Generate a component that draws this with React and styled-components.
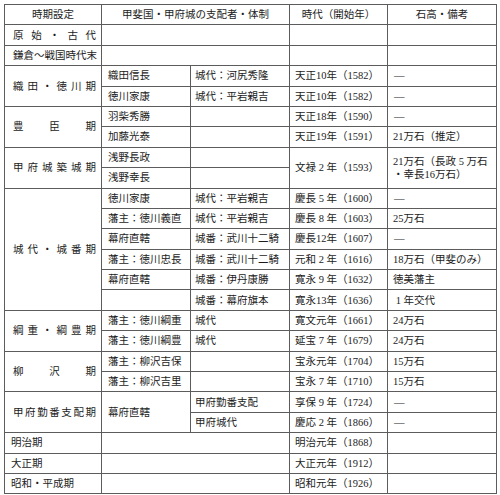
import React from 'react';
import styled, { createGlobalStyle } from 'styled-components';

const GlobalStyle = createGlobalStyle`
  body {
    margin: 0;
    background: #ffffff;
    font-family: "Liberation Serif", "Noto Sans CJK JP", serif;
    color: #1c1c1c;
  }
`;

const Page = styled.div`
  padding: 4px 0 0 4px;
`;

const Table = styled.table`
  border-collapse: collapse;
  table-layout: fixed;
  width: 492px;
  border: 1px solid #4a4a4a;
  font-size: 10.5px;
  line-height: 1.25;
`;

const Row = styled.tr`
  height: 20.4px;
`;

const Cell = styled.td`
  border: 1px solid #5c5c5c;
  padding: 0 ${({ $pad }) => $pad ?? 5}px;
  text-align: ${({ $center }) => ($center ? 'center' : 'left')};
  vertical-align: middle;
  white-space: nowrap;
`;

const Spread = styled.div`
  display: flex;
  justify-content: space-between;
  padding: 0 0 0 3px;
`;

const Num = styled.span`
  display: inline-block;
  width: 1em;
  text-align: center;
`;

const Dash = styled.span`
  display: inline-block;
  padding-left: 1px;
`;

const spread = (text) => (
  <Spread>
    {[...text].map((c, i) => (
      <span key={i}>{c}</span>
    ))}
  </Spread>
);

const dash = <Dash>—</Dash>;

const App = () => {
  return (
    <Page>
      <GlobalStyle />
      <Table>
        <colgroup>
          <col style={{ width: 97 }} />
          <col style={{ width: 89 }} />
          <col style={{ width: 99 }} />
          <col style={{ width: 98 }} />
          <col style={{ width: 109 }} />
        </colgroup>
        <tbody>
          <Row>
            <Cell $center>時期設定</Cell>
            <Cell $center colSpan={2}>甲斐国・甲府城の支配者・体制</Cell>
            <Cell $center>時代（開始年）</Cell>
            <Cell $center>石高・備考</Cell>
          </Row>
          <Row>
            <Cell>{spread('原始・古代')}</Cell>
            <Cell colSpan={2} />
            <Cell />
            <Cell />
          </Row>
          <Row>
            <Cell>{spread('鎌倉～戦国時代末')}</Cell>
            <Cell colSpan={2} />
            <Cell />
            <Cell />
          </Row>
          <Row>
            <Cell rowSpan={2}>{spread('織田・徳川期')}</Cell>
            <Cell $pad={6}>織田信長</Cell>
            <Cell $pad={4}>城代：河尻秀隆</Cell>
            <Cell>天正10年（1582）</Cell>
            <Cell>{dash}</Cell>
          </Row>
          <Row>
            <Cell $pad={6}>徳川家康</Cell>
            <Cell $pad={4}>城代：平岩親吉</Cell>
            <Cell>天正10年（1582）</Cell>
            <Cell>{dash}</Cell>
          </Row>
          <Row>
            <Cell rowSpan={2}>{spread('豊臣期')}</Cell>
            <Cell $pad={6}>羽柴秀勝</Cell>
            <Cell />
            <Cell>天正18年（1590）</Cell>
            <Cell>{dash}</Cell>
          </Row>
          <Row>
            <Cell $pad={6}>加藤光泰</Cell>
            <Cell />
            <Cell>天正19年（1591）</Cell>
            <Cell>21万石（推定）</Cell>
          </Row>
          <Row>
            <Cell rowSpan={2}>{spread('甲府城築城期')}</Cell>
            <Cell $pad={6}>浅野長政</Cell>
            <Cell />
            <Cell rowSpan={2}>
              文禄<Num>2</Num>年（1593）
            </Cell>
            <Cell rowSpan={2}>
              21万石（長政<Num>5</Num>万石
              <br />
              ・幸長16万石）
            </Cell>
          </Row>
          <Row>
            <Cell $pad={6}>浅野幸長</Cell>
            <Cell />
          </Row>
          <Row>
            <Cell rowSpan={6}>{spread('城代・城番期')}</Cell>
            <Cell $pad={6}>徳川家康</Cell>
            <Cell $pad={4}>城代：平岩親吉</Cell>
            <Cell>
              慶長<Num>5</Num>年（1600）
            </Cell>
            <Cell>{dash}</Cell>
          </Row>
          <Row>
            <Cell $pad={6}>藩主：徳川義直</Cell>
            <Cell $pad={4}>城代：平岩親吉</Cell>
            <Cell>
              慶長<Num>8</Num>年（1603）
            </Cell>
            <Cell>25万石</Cell>
          </Row>
          <Row>
            <Cell $pad={6}>幕府直轄</Cell>
            <Cell $pad={4}>城番：武川十二騎</Cell>
            <Cell>慶長12年（1607）</Cell>
            <Cell>{dash}</Cell>
          </Row>
          <Row>
            <Cell $pad={6}>藩主：徳川忠長</Cell>
            <Cell $pad={4}>城番：武川十二騎</Cell>
            <Cell>
              元和<Num>2</Num>年（1616）
            </Cell>
            <Cell>18万石（甲斐のみ）</Cell>
          </Row>
          <Row>
            <Cell $pad={6}>幕府直轄</Cell>
            <Cell $pad={4}>城番：伊丹康勝</Cell>
            <Cell>
              寛永<Num>9</Num>年（1632）
            </Cell>
            <Cell>徳美藩主</Cell>
          </Row>
          <Row>
            <Cell />
            <Cell $pad={4}>城番：幕府旗本</Cell>
            <Cell>寛永13年（1636）</Cell>
            <Cell>
              <Num>1</Num>年交代
            </Cell>
          </Row>
          <Row>
            <Cell rowSpan={2}>{spread('綱重・綱豊期')}</Cell>
            <Cell $pad={6}>藩主：徳川綱重</Cell>
            <Cell $pad={4}>城代</Cell>
            <Cell>寛文元年（1661）</Cell>
            <Cell>24万石</Cell>
          </Row>
          <Row>
            <Cell $pad={6}>藩主：徳川綱豊</Cell>
            <Cell $pad={4}>城代</Cell>
            <Cell>
              延宝<Num>7</Num>年（1679）
            </Cell>
            <Cell>24万石</Cell>
          </Row>
          <Row>
            <Cell rowSpan={2}>{spread('柳沢期')}</Cell>
            <Cell $pad={6}>藩主：柳沢吉保</Cell>
            <Cell />
            <Cell>宝永元年（1704）</Cell>
            <Cell>15万石</Cell>
          </Row>
          <Row>
            <Cell $pad={6}>藩主：柳沢吉里</Cell>
            <Cell />
            <Cell>
              宝永<Num>7</Num>年（1710）
            </Cell>
            <Cell>15万石</Cell>
          </Row>
          <Row>
            <Cell rowSpan={2}>{spread('甲府勤番支配期')}</Cell>
            <Cell $pad={6} rowSpan={2}>幕府直轄</Cell>
            <Cell $pad={4}>甲府勤番支配</Cell>
            <Cell>
              享保<Num>9</Num>年（1724）
            </Cell>
            <Cell>{dash}</Cell>
          </Row>
          <Row>
            <Cell $pad={4}>甲府城代</Cell>
            <Cell>
              慶応<Num>2</Num>年（1866）
            </Cell>
            <Cell>{dash}</Cell>
          </Row>
          <Row>
            <Cell $pad={6}>明治期</Cell>
            <Cell colSpan={2} />
            <Cell>明治元年（1868）</Cell>
            <Cell />
          </Row>
          <Row>
            <Cell $pad={6}>大正期</Cell>
            <Cell colSpan={2} />
            <Cell>大正元年（1912）</Cell>
            <Cell />
          </Row>
          <Row>
            <Cell $pad={6}>昭和・平成期</Cell>
            <Cell colSpan={2} />
            <Cell>昭和元年（1926）</Cell>
            <Cell />
          </Row>
        </tbody>
      </Table>
    </Page>
  );
};

export default App;
